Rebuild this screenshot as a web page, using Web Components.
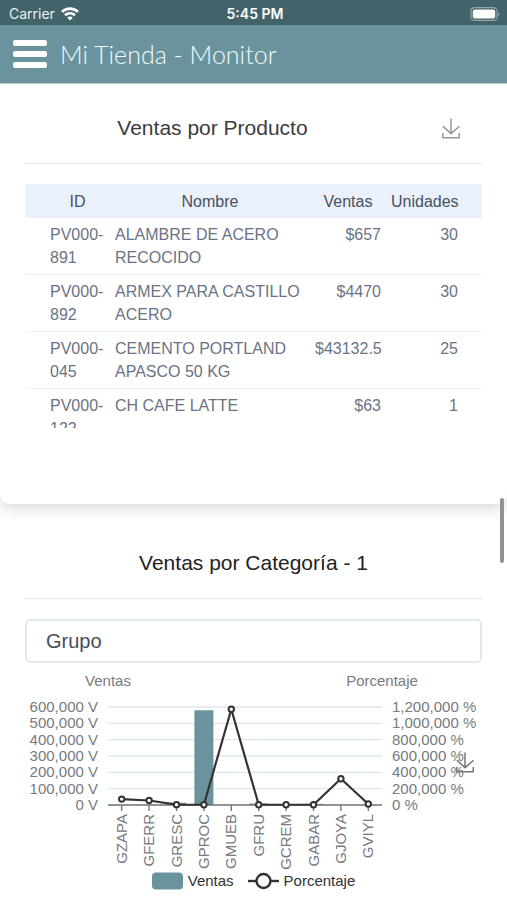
<!DOCTYPE html>
<html lang="es">
<head>
<meta charset="utf-8">
<meta name="viewport" content="width=device-width, initial-scale=1">
<title>Mi Tienda - Monitor</title>
<style>
  body { margin: 0; background: #fff; font-family: "Liberation Sans", Arial, sans-serif; color: #3c3c3c; }
</style>
</head>
<body>
<tienda-app></tienda-app>

<script>
const define = (name, html, setup) => {
  const template = document.createElement('template');
  template.innerHTML = html;
  customElements.define(name, class extends HTMLElement {
    constructor() {
      super();
      this.attachShadow({ mode: 'open' }).append(template.content.cloneNode(true));
    }
    connectedCallback() { if (setup) setup(this, this.shadowRoot); }
  });
};

define('status-bar', `
<style>
  :host { display: grid; grid-template-columns: 1fr auto 1fr; align-items: center; height: 25px; padding: 2px 6px 0 9px; box-sizing: border-box; background: #43636a; color: #e9f1f3; font: 14px/20px Inter, sans-serif; }
  .left { display: flex; align-items: center; gap: 6px; }
  .time { font-weight: 600; color: #fff; }
  .battery { justify-self: end; }
  svg { display: block; }
</style>
<div class="left"><span>Carrier</span>
  <svg width="18" height="14" viewBox="0 0 18 14" fill="none" stroke="#fff" stroke-width="2.6" aria-hidden="true"><path d="M1 4.9a11.5 11.5 0 0 1 16 0M4 8.3a7.2 7.2 0 0 1 10 0"/><path d="M9 13.6L6.2 10.8a4 4 0 0 1 5.6 0z" fill="#fff" stroke="none"/></svg>
</div>
<span class="time">5:45 PM</span>
<svg class="battery" width="31" height="14" viewBox="0 0 31 14" aria-hidden="true"><rect x="1" y=".7" width="26" height="12.6" rx="3.6" fill="none" stroke="#91a5aa" stroke-width="1.2"/><rect x="2.8" y="2.4" width="22.4" height="9.2" rx="2" fill="#fff"/><path d="M28.5 4.8q2.4 2.2 0 4.4z" fill="#91a5aa"/></svg>
`);

define('app-bar', `
<style>
  :host { display: flex; align-items: center; gap: 13px; height: 59px; padding-left: 13px; box-sizing: border-box; background: #6b939d; border-bottom: 1px solid #b3c8cd; }
  button { border: 0; padding: 0; background: none; width: 34px; height: 28px; display: flex; flex-direction: column; justify-content: space-between; }
  i { display: block; width: 100%; height: 6px; border-radius: 2px; background: #fff; }
  h1 { margin: 0; font: 300 25px/32px Lato, sans-serif; color: #eefbff; }
</style>
<button type="button" aria-label="Menú"><i></i><i></i><i></i></button>
<h1><slot></slot></h1>
`);

define('download-button', `
<style>
  :host { display: block; }
  button { display: block; border: 0; padding: 0; background: none; color: inherit; }
  svg { display: block; }
</style>
<button type="button" aria-label="Descargar"><svg width="20" height="21" viewBox="-0.8 -1 60 62" fill="none" stroke="currentColor" stroke-width="4.5"><path d="M4.7 22.9L29.3 45.5L54.7 23.4M4.6 43.6V58H53.8V43.6M29.2 45.1V0"/></svg></button>
`);

define('report-card', `
<style>
  :host { display: block; padding: 0 25px; background: #fff; }
  header { display: flex; align-items: center; padding-bottom: 21px; border-bottom: 1px solid #e2e6ef; margin-bottom: 20px; }
  h2 { flex: 1; margin: 0; text-align: center; font: 400 21px/28px "Liberation Sans", Arial, sans-serif; }
</style>
<header><h2><slot name="title"></slot></h2><slot name="action"></slot></header>
<slot></slot>
`);

define('product-table', `
<style>
  :host { display: block; height: 244px; overflow: hidden; }
  table { width: 100%; table-layout: fixed; border-collapse: separate; border-spacing: 0; font-size: 16px; line-height: 23px; color: #6a7386; }
  th { font-weight: 400; color: #48505e; background: #ebf1fa; height: 34px; padding: 0 5px; }
  td { padding: 5px; vertical-align: top; border-bottom: 1px solid #edf2f5; }
  th:first-child, td:first-child { width: 55px; padding-left: 25px; }
  th:nth-child(3), td:nth-child(3) { width: 66px; }
  th:last-child, td:last-child { width: 67px; padding-right: 24px; }
  td:nth-child(n+3) { text-align: right; white-space: nowrap; }
</style>
<table>
  <thead><tr><th scope="col">ID</th><th scope="col">Nombre</th><th scope="col">Ventas</th><th scope="col">Unidades</th></tr></thead>
  <tbody></tbody>
</table>
`, (host, root) => {
  const rows = [
    ['PV000-891', 'ALAMBRE DE ACERO RECOCIDO', '$657', '30'],
    ['PV000-892', 'ARMEX PARA CASTILLO ACERO', '$4470', '30'],
    ['PV000-045', 'CEMENTO PORTLAND APASCO 50 KG', '$43132.5', '25'],
    ['PV000-122', 'CH CAFE LATTE', '$63', '1']
  ];
  root.querySelector('tbody').innerHTML = rows.map(r => '<tr>' + r.map(c => `<td>${c}</td>`).join('') + '</tr>').join('');
});

define('group-select', `
<style>
  :host { display: block; }
  select { display: block; width: 100%; height: 44px; box-sizing: border-box; appearance: none; border: 2px solid #e3e8ef; border-radius: 5px; background: #fff; padding: 0 19px; font: 20px/28px "Liberation Sans", Arial, sans-serif; color: #454d5b; }
</style>
<select aria-label="Agrupar por"><option>Grupo</option></select>
`);

define('category-chart', `
<style>
  :host { display: block; position: relative; }
  .plot { display: block; width: 100%; height: auto; font-size: 15px; fill: #777a80; }
  .legend { display: flex; justify-content: center; align-items: center; gap: 14px; color: #333; font-size: 15px; line-height: 20px; }
  .item { display: flex; align-items: center; gap: 5px; }
  .save { position: absolute; right: 7px; top: 89px; color: #777; }
</style>
<svg class="plot" viewBox="0 0 457 208" role="img" aria-label="Ventas y porcentaje por categoría"></svg>
<download-button class="save"></download-button>
<div class="legend">
  <span class="item"><svg width="31" height="18" aria-hidden="true"><rect y=".5" width="31" height="17" rx="4" fill="#6b939d"/></svg>Ventas</span>
  <span class="item"><svg width="31" height="18" aria-hidden="true"><path d="M0 9H31" stroke="#333" stroke-width="2.4"/><circle cx="15.5" cy="9" r="7" fill="#fff" stroke="#333" stroke-width="2.4"/></svg>Porcentaje</span>
</div>
`, (host, root) => {
  const names = ['GZAPA', 'GFERR', 'GRESC', 'GPROC', 'GMUEB', 'GFRU', 'GCREM', 'GABAR', 'GJOYA', 'GVIYL'];
  const sales = [0, 0, 14000, 580000, 0, 9000, 0, 7000, 0, 0];
  const percent = [72000, 55000, 4000, 3000, 1172000, 3000, 3000, 3000, 322000, 13000];
  const left = [600, 500, 400, 300, 200, 100, 0].map(n => (n ? n + ',000' : '0') + ' V');
  const right = ['1,200,000 %', '1,000,000 %', '800,000 %', '600,000 %', '400,000 %', '200,000 %', '0 %'];
  const x0 = 83, x1 = 357, top = 44, base = 142, step = (x1 - x0) / names.length;
  const cx = i => x0 + step * (i + 0.5);
  const y = (v, max) => base - (base - top) * v / max;
  let grid = '<text x="83" y="23" text-anchor="middle">Ventas</text><text x="357" y="23" text-anchor="middle">Porcentaje</text>';
  let axis = `<path d="M${x0} ${base}H${x1}" stroke="#6e7079" stroke-width="1.3"/>`;
  let bars = '';
  left.forEach((label, i) => {
    const ly = top + (base - top) * i / 6;
    if (i < 6) grid += `<path d="M${x0} ${ly}H${x1}" stroke="#e0e6f1" stroke-width="1.3"/>`;
    grid += `<text x="73" y="${ly + 5}" text-anchor="end">${label}</text><text x="367" y="${ly + 5}">${right[i]}</text>`;
  });
  names.forEach((name, i) => {
    const x = cx(i), by = y(sales[i], 600000);
    bars += `<rect x="${x - 9.5}" y="${by}" width="19" height="${base - by}" fill="#6b939d"/>`;
    axis += `<path d="M${x} ${base}v6" stroke="#6e7079" stroke-width="1.3"/>`;
    axis += `<text transform="translate(${x + 5} 151) rotate(-90)" text-anchor="end">${name}</text>`;
  });
  const pts = percent.map((v, i) => [cx(i), y(v, 1200000)]);
  const line = `<polyline points="${pts.join(' ')}" fill="none" stroke="#333" stroke-width="2.2" stroke-linejoin="bevel"/>`
    + pts.map(p => `<circle cx="${p[0]}" cy="${p[1]}" r="2.7" fill="#fff" stroke="#333" stroke-width="2"/>`).join('');
  root.querySelector('.plot').innerHTML = grid + bars + axis + line;
});

define('scroll-thumb', `
<style>
  :host { position: absolute; right: 3px; top: 498px; width: 4px; height: 65px; border-radius: 2px; background: #929292; }
</style>
`);

define('tienda-app', `
<style>
  :host { display: block; position: relative; }
  .products { padding-top: 30px; padding-bottom: 76px; border-radius: 0 0 10px 10px; box-shadow: 0 3px 16px rgba(0,0,0,.18); clip-path: inset(0 0 -30px 0); }
  .products download-button { color: #999; margin: 0 21px 0 41px; }
  .categories { padding-top: 45px; color: #222; background: none; }
</style>
<status-bar></status-bar>
<app-bar>Mi Tienda - Monitor</app-bar>
<main>
  <report-card class="products">
    <span slot="title">Ventas por Producto</span>
    <download-button slot="action"></download-button>
    <product-table></product-table>
  </report-card>
  <report-card class="categories">
    <span slot="title">Ventas por Categoría - 1</span>
    <group-select></group-select>
    <category-chart></category-chart>
  </report-card>
</main>
<scroll-thumb></scroll-thumb>
`);
</script>
</body>
</html>
